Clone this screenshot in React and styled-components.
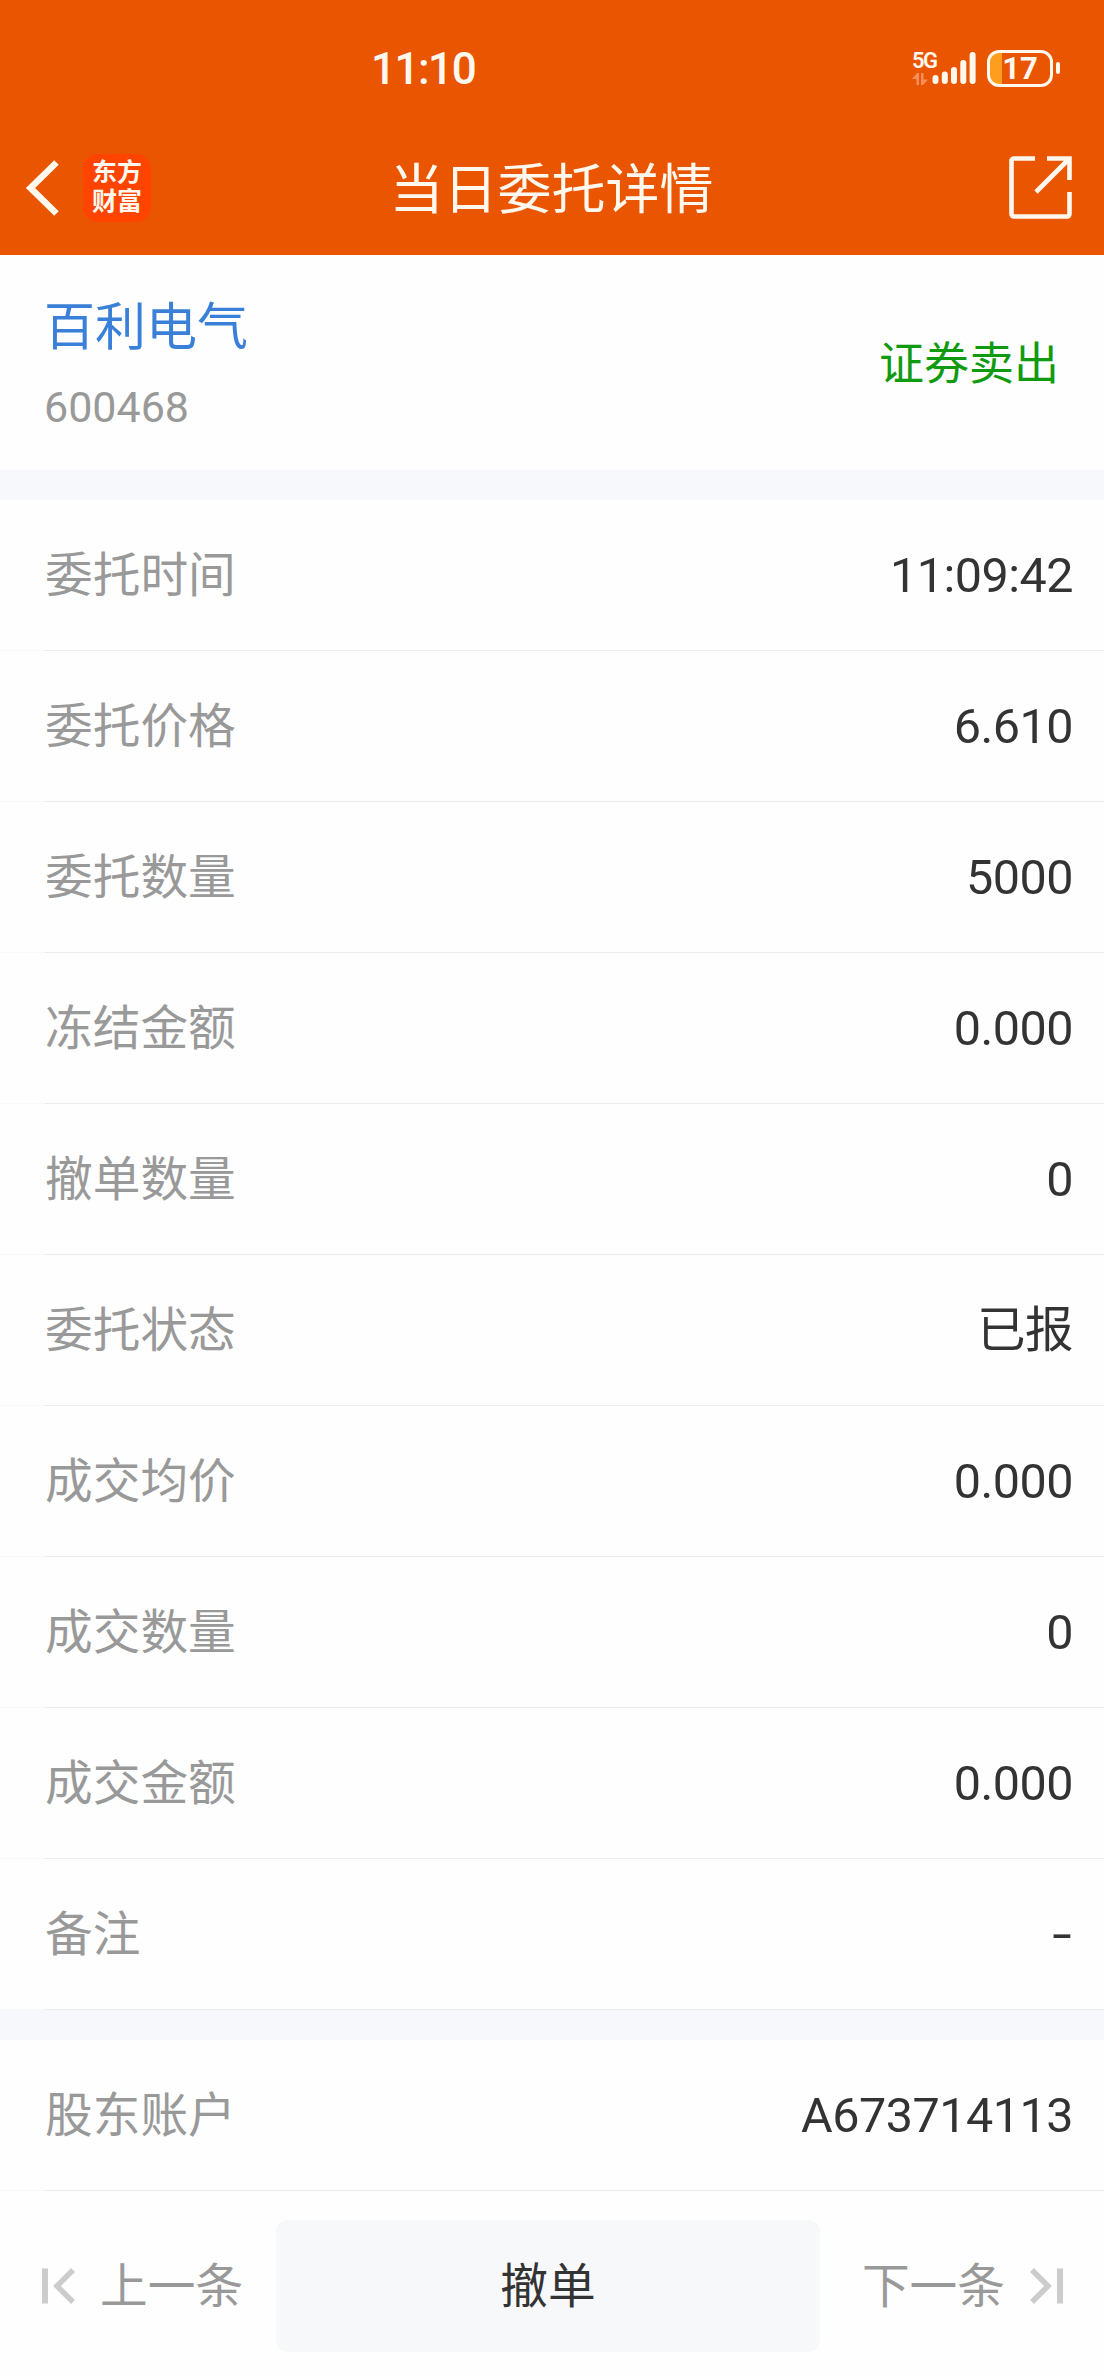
import React from "react";
import styled, { createGlobalStyle } from "styled-components";

const orderRows = [
  { label: "委托时间", value: "11:09:42" },
  { label: "委托价格", value: "6.610" },
  { label: "委托数量", value: "5000" },
  { label: "冻结金额", value: "0.000" },
  { label: "撤单数量", value: "0" },
  { label: "委托状态", value: "已报" },
  { label: "成交均价", value: "0.000" },
  { label: "成交数量", value: "0" },
  { label: "成交金额", value: "0.000" },
  { label: "备注", value: "-", dash: true },
];

const accountRows = [{ label: "股东账户", value: "A673714113" }];

const SignalIcon = () => (
  <svg width="46" height="36" viewBox="0 0 46 36">
    <g stroke="#fff8ee" strokeWidth="6" strokeLinecap="round">
      <path d="M5.5 28v3M14.8 24.5v6.5M24 20v11M33.3 13v18M42.6 5v26" />
    </g>
  </svg>
);

const DataArrows = () => (
  <svg width="16" height="12" viewBox="0 0 16 12">
    <path d="M0 6 5 0h2v12H4.5V6zM9 0h2.500v6.500H16L11 12H9z" fill="#f58d5c" />
  </svg>
);

const BackIcon = () => (
  <svg width="36" height="58" viewBox="0 0 36 58">
    <path
      d="M31.5 3.5 5.5 29l26 25.500"
      fill="none"
      stroke="#fff8ee"
      strokeWidth="6.5"
    />
  </svg>
);

const ShareIcon = () => (
  <svg width="64" height="64" viewBox="0 0 64 64">
    <g fill="none" stroke="#fff8ee" strokeWidth="4.6">
      <path d="M26 2.5H5A2.5 2.5 0 0 0 2.5 5v53A2.5 2.5 0 0 0 5 60.5h53a2.5 2.5 0 0 0 2.5-2.5V36" />
      <path d="M38 2.5h22.5V24M60 3 27 36" />
    </g>
  </svg>
);

const StepIcon = ({ flip }) => (
  <StepSvg width="34" height="38" viewBox="0 0 34 38" $flip={flip}>
    <path d="M3 1.5v35" stroke="#ccc" strokeWidth="6" />
    <path d="M31 3 15 19l16 16" fill="none" stroke="#ccc" strokeWidth="5.5" />
  </StepSvg>
);

const App = () => {
  return (
    <>
      <GlobalStyle />
      <Page>
        <Header>
          <StatusBar>
            <Clock>11:10</Clock>
            <StatusIcons>
              <Network>
                <NetworkLabel>5G</NetworkLabel>
                <DataArrows />
              </Network>
              <SignalIcon />
              <Battery>17</Battery>
              <BatteryTip />
            </StatusIcons>
          </StatusBar>
          <NavBar>
            <NavSide>
              <BackIcon />
              <Logo>东方财富</Logo>
            </NavSide>
            <Title>当日委托详情</Title>
            <NavSide $end>
              <ShareIcon />
            </NavSide>
          </NavBar>
        </Header>

        <Stock>
          <div>
            <StockName>百利电气</StockName>
            <StockCode>600468</StockCode>
          </div>
          <Direction>证券卖出</Direction>
        </Stock>

        <Gap />
        {orderRows.map((row) => (
          <Row key={row.label}>
            <Label>{row.label}</Label>
            <Value $dash={row.dash}>{row.value}</Value>
          </Row>
        ))}
        <Gap />
        {accountRows.map((row) => (
          <Row key={row.label}>
            <Label>{row.label}</Label>
            <Value>{row.value}</Value>
          </Row>
        ))}

        <Footer>
          <StepBtn>
            <StepIcon />
            <StepLabel>上一条</StepLabel>
          </StepBtn>
          <CancelBtn>撤单</CancelBtn>
          <StepBtn $next>
            <StepLabel>下一条</StepLabel>
            <StepIcon flip />
          </StepBtn>
        </Footer>
      </Page>
    </>
  );
};

const GlobalStyle = createGlobalStyle`
  * {
    box-sizing: border-box;
  }

  body {
    margin: 0;
    background: #fefefe;
    font-family: Roboto, "Noto Sans CJK SC", sans-serif;
  }

  svg {
    display: block;
    flex-shrink: 0;
  }
`;

const Page = styled.div`
  width: 1104px;
  height: 2376px;
  overflow: hidden;
  display: flex;
  flex-direction: column;
  background: #fefefe;
`;

const Header = styled.header`
  height: 255px;
  flex-shrink: 0;
  background: #ea5502;
  color: #fff8ee;
`;

const StatusBar = styled.div`
  height: 122px;
  padding: 14px 44px 0 371px;
  display: flex;
  align-items: center;
  justify-content: space-between;
`;

const Clock = styled.span`
  padding-top: 2px;
  font-size: 44px;
  font-weight: 500;
  line-height: 50px;
  letter-spacing: -1.5px;
`;

const StatusIcons = styled.div`
  display: flex;
  align-items: center;
`;

const Network = styled.div`
  width: 18px;
  height: 34px;
  display: flex;
  flex-direction: column;
  justify-content: space-between;
`;

const NetworkLabel = styled.span`
  font-size: 22px;
  font-weight: 600;
  line-height: 20px;
  letter-spacing: -1.5px;
`;

const Battery = styled.div`
  width: 66px;
  height: 37px;
  margin: 0 3px 0 11px;
  border: 3px solid #fff8ee;
  border-radius: 12px;
  background: linear-gradient(to right, #ff9d1e 12px, transparent 12px);
  font-size: 31px;
  font-weight: 700;
  line-height: 32px;
  text-align: center;
`;

const BatteryTip = styled.div`
  width: 4px;
  height: 12px;
  border-radius: 2px;
  background: #fff8ee;
`;

const NavBar = styled.div`
  height: 133px;
  padding: 0 31px 2px 25px;
  display: flex;
  align-items: center;
  justify-content: space-between;
`;

const NavSide = styled.div`
  width: 200px;
  display: flex;
  align-items: center;
  justify-content: ${(props) => (props.$end ? "flex-end" : "flex-start")};
`;

const Logo = styled.div`
  width: 68px;
  height: 68px;
  margin-left: 22px;
  padding: 2px 8px 0 9px;
  border-radius: 15px;
  background: #ff4400;
  font-family: "Noto Sans CJK SC", sans-serif;
  font-size: 25px;
  font-weight: 700;
  line-height: 29px;
  word-break: break-all;
`;

const Title = styled.h1`
  margin: 0;
  padding: 6px 0 0 5px;
  font-size: 54px;
  font-weight: 400;
  line-height: 70px;
`;

const Stock = styled.section`
  height: 215px;
  flex-shrink: 0;
  padding: 0 45px 0 44px;
  display: flex;
  align-items: center;
  justify-content: space-between;
`;

const StockName = styled.div`
  padding-top: 9px;
  font-size: 51px;
  line-height: 74px;
  color: #3b80d8;
`;

const StockCode = styled.div`
  margin-top: 5px;
  font-size: 43px;
  line-height: 74px;
  color: #999;
`;

const Direction = styled.div`
  padding-top: 4px;
  font-size: 45px;
  line-height: 66px;
  color: #109a10;
`;

const Gap = styled.div`
  height: 30px;
  flex-shrink: 0;
  background: #f6f8fb;
`;

const Row = styled.div`
  height: 151px;
  flex-shrink: 0;
  padding: 0 31px 0 45px;
  display: flex;
  align-items: center;
  justify-content: space-between;
  background: linear-gradient(to right, #f8f8f8 45px, #ebebeb 45px) bottom /
    100% 1px no-repeat;
`;

const Label = styled.span`
  font-size: 47.7px;
  line-height: 70px;
  color: #999;
`;

const Value = styled.span`
  font-size: 48.5px;
  line-height: 70px;
  letter-spacing: -0.5px;
  color: #333;
  margin-right: ${(props) => (props.$dash ? "2px" : "0")};
  transform: ${(props) => (props.$dash ? "scaleX(1.45)" : "none")};
  transform-origin: right;
`;

const Footer = styled.footer`
  flex: 1;
  padding: 29px 41px 24px 42px;
  display: flex;
  align-items: stretch;
`;

const StepBtn = styled.button`
  flex: ${(props) => (props.$next ? "1" : "0 0 234px")};
  padding: 0;
  border: none;
  background: transparent;
  display: flex;
  align-items: center;
  justify-content: ${(props) => (props.$next ? "flex-end" : "flex-start")};
  gap: 24px;
  font: inherit;
  font-size: 47.7px;
  color: #999;
`;

const StepLabel = styled.span`
  padding-bottom: 7px;
`;

const StepSvg = styled.svg`
  transform: ${(props) => (props.$flip ? "scaleX(-1)" : "none")};
`;

const CancelBtn = styled.button`
  width: 544px;
  padding: 0 0 8px;
  border: none;
  border-radius: 12px;
  background: #f7f8fa;
  font: inherit;
  font-size: 47.7px;
  color: #333;
`;

export default App;
